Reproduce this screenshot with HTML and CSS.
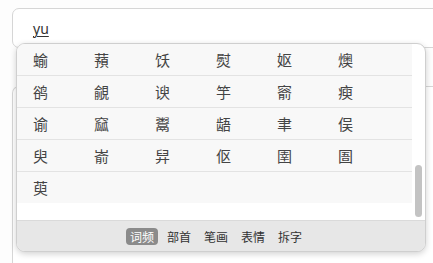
FILE: index.html
```html
<!DOCTYPE html>
<html>
<head>
<meta charset="utf-8">
<link rel="stylesheet" href="styles.css">
</head>
<body>
<div class="field"><span class="comp">yu</span></div>
<div class="field second"></div>
<div class="popup">
  <div class="list">
    <div class="row"><span>蝓</span><span>蕷</span><span>饫</span><span>熨</span><span>妪</span><span>燠</span></div>
    <div class="row"><span>鹆</span><span>覦</span><span>谀</span><span>竽</span><span>窬</span><span>瘐</span></div>
    <div class="row"><span>谕</span><span>窳</span><span>鬻</span><span>龉</span><span>聿</span><span>俣</span></div>
    <div class="row"><span>臾</span><span>嵛</span><span>舁</span><span>伛</span><span>圉</span><span>圄</span></div>
    <div class="row"><span>萸</span></div>
  </div>
  <div class="scroll"></div>
  <div class="tabs">
    <span class="tab active">词频</span>
    <span class="tab">部首</span>
    <span class="tab">笔画</span>
    <span class="tab">表情</span>
    <span class="tab">拆字</span>
  </div>
</div>
</body>
</html>
```
FILE: styles.css
```css
html, body {
  margin: 0;
  padding: 0;
  background: #fdfdfd;
  width: 433px;
  height: 263px;
  overflow: hidden;
  font-family: "Noto Sans CJK SC", "Noto Sans", sans-serif;
}
body {
  padding-top: 8px;
  box-sizing: border-box;
  position: relative;
}
.field {
  margin-left: 12px;
  width: 440px;
  border: 1px solid #d6d6d6;
  border-radius: 7px;
  background: #fff;
  box-sizing: border-box;
  height: 40px;
  display: flex;
  align-items: center;
  padding-left: 20px;
}
.comp {
  font-family: "Noto Sans", sans-serif;
  font-size: 14px;
  color: #333;
  text-decoration: underline;
  text-underline-offset: 2px;
  text-decoration-thickness: 1px;
}
.second {
  margin-top: 38px;
  height: 177px;
  border-bottom: none;
  border-radius: 7px 7px 0 0;
}
.popup {
  position: absolute;
  left: 16px;
  top: 43px;
  width: 410px;
  height: 209px;
  box-sizing: border-box;
  border: 1px solid #cfcfcf;
  border-radius: 9px;
  background: #fff;
  box-shadow: 0 2px 6px rgba(0,0,0,0.18);
  overflow: hidden;
  display: flex;
  flex-direction: column;
}
.list {
  width: 395px;
  height: 176px;
  display: flex;
  flex-direction: column;
}
.row {
  height: 32px;
  box-sizing: border-box;
  background: #f8f8f8;
  border-bottom: 1px solid #e3e3e3;
  display: flex;
  align-items: center;
  padding-left: 16px;
}
.row:last-child {
  border-bottom: none;
  height: 31px;
}
.row span {
  width: 61px;
  font-size: 15px;
  color: #444;
  line-height: 1;
}
.scroll {
  position: absolute;
  left: 398px;
  top: 121px;
  width: 7px;
  height: 52px;
  border-radius: 4px;
  background: #c3c3c3;
}
.tabs {
  flex: 1;
  background: #e7e7e7;
  border-top: 1px solid #dadada;
  display: flex;
  align-items: center;
  padding-left: 109px;
  gap: 5px;
}
.tab {
  font-size: 12px;
  line-height: 17px;
  height: 17px;
  padding: 0 4px;
  color: #333;
  border-radius: 4px;
}
.tab.active {
  background: #8b8b8b;
  color: #fff;
}
```
